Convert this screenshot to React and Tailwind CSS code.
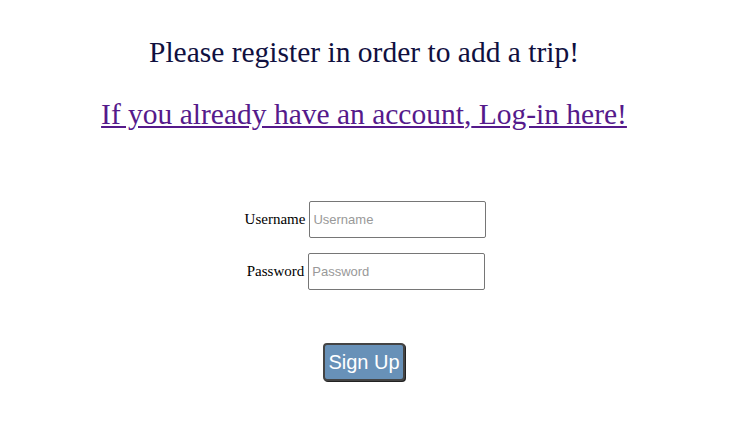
export default function App() {
  return (
    <main className="min-h-screen bg-white" style={{ fontFamily: '"Liberation Serif", serif' }}>
      <div className="flex flex-col items-center pt-[36px] pr-[22px]">
        <h1 className="text-[29.5px] leading-[32px] text-[#10103f]">Please register in order to add a trip!</h1>
        <p className="mt-[30px] text-[29.5px] leading-[32px] text-[#551a8b]">
          <a href="#" className="underline">If you already have an account</a>,<a href="#" className="underline"> Log-in here!</a>
        </p>

        <form className="mt-[71px] flex flex-col items-center">
          <div className="flex items-center gap-[4px] pl-[3px]">
            <label className="text-[15px] text-black">Username</label>
            <input
              placeholder="Username"
              className="w-[177px] h-[37px] border border-[#767676] rounded-[2px] px-[3px] text-[13px] placeholder:text-[#999]"
              style={{ fontFamily: '"Liberation Sans", Arial, sans-serif' }}
            />
          </div>
          <div className="mt-[15px] flex items-center gap-[4px] pl-[4px]">
            <label className="text-[15px] text-black">Password</label>
            <input
              type="password"
              placeholder="Password"
              className="w-[177px] h-[37px] border border-[#767676] rounded-[2px] px-[3px] text-[13px] placeholder:text-[#999]"
              style={{ fontFamily: '"Liberation Sans", Arial, sans-serif' }}
            />
          </div>
          <button
            type="button"
            className="mt-[53px] w-[82px] h-[38px] bg-[#6891b8] text-white text-[20px] border-2 border-[#444] rounded-[4px] shadow-[1px_1px_0_#222]"
            style={{ fontFamily: '"Liberation Sans", Arial, sans-serif' }}
          >
            Sign Up
          </button>
        </form>
      </div>
    </main>
  )
}
